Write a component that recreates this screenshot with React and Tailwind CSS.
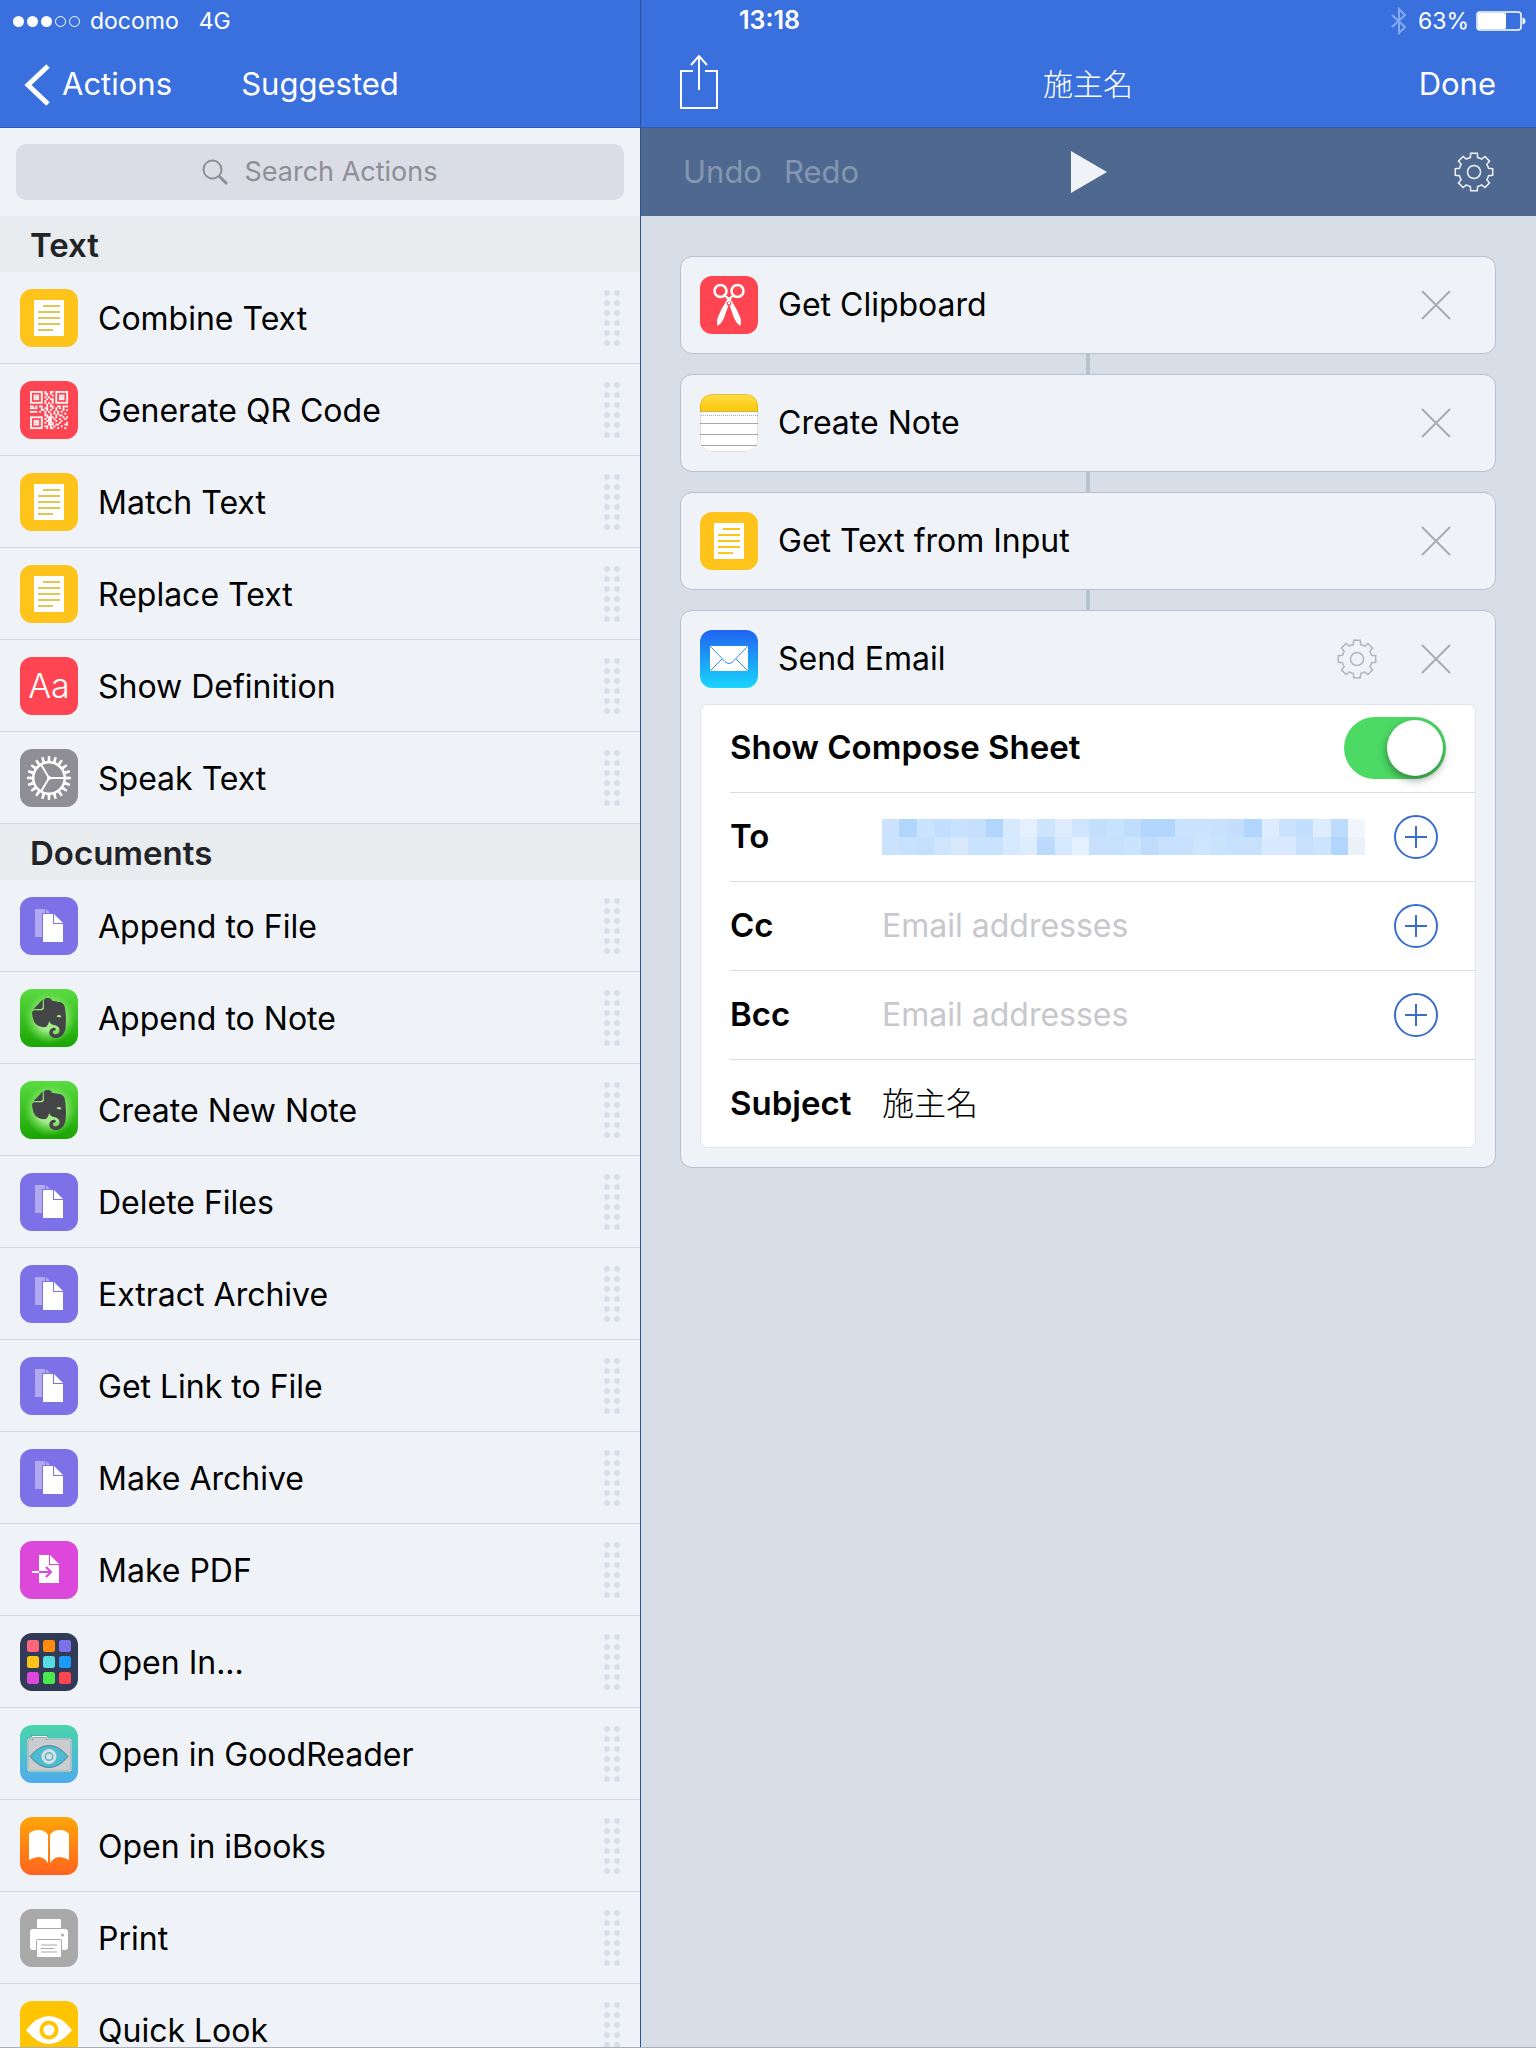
import React from "react";
import { SiEvernote } from "react-icons/si";

const FONT = "font-['Inter','Noto_Sans_CJK_JP',sans-serif]";

/* ---------- shared geometry ---------- */

function toothedPath(c, count, rOuter, rInner, outerHalf, innerHalf) {
  const pt = (r, deg) => {
    const a = (deg * Math.PI) / 180;
    return `${(c + r * Math.cos(a)).toFixed(2)} ${(c + r * Math.sin(a)).toFixed(2)}`;
  };
  let d = "";
  for (let i = 0; i < count; i++) {
    const a = (360 / count) * i - 90;
    const start = pt(rInner, a - innerHalf);
    d += i === 0 ? `M${start}` : `A${rInner} ${rInner} 0 0 1 ${start}`;
    d += `L${pt(rOuter, a - outerHalf)}L${pt(rOuter, a + outerHalf)}L${pt(rInner, a + innerHalf)}`;
  }
  return `${d}A${rInner} ${rInner} 0 0 1 ${pt(rInner, -90 - innerHalf)}Z`;
}

const GEAR = toothedPath(20, 8, 19, 15, 10, 14);
const COG = toothedPath(29, 20, 22, 17, 3, 5);

/* ---------- app tiles ---------- */

function Tile({ fill, children }) {
  return (
    <svg viewBox="0 0 58 58" className="size-[58px] shrink-0 rounded-xl" aria-hidden="true">
      <rect width="58" height="58" fill={fill} />
      {children}
    </svg>
  );
}

function TextTile({ line = "#e0c557" }) {
  return (
    <Tile fill="#fec41b">
      <rect x="14" y="11" width="30" height="36" fill="#fff" />
      <path d="M23 17H40M18 23H40M18 29H40M18 35H40M18 41H33" stroke={line} strokeWidth="2" />
    </Tile>
  );
}

const QR = [
  "#######.#..##.#######",
  "#.....#.##.#..#.....#",
  "#.###.#..#..#.#.###.#",
  "#.###.#.#.#...#.###.#",
  "#.###.#..#.##.#.###.#",
  "#.....#.#...#.#.....#",
  "#######.#.#.#.#######",
  ".........#.#.........",
  "##.#.##..#.##..##.###",
  "####..#.##..#.#.#.#..",
  "......##.#.#..#...#.#",
  "####.#..#.#..#.#.#...",
  "........#..#.#.#...#.",
  "........##.#..#.##...",
  "#######..####.#...#.#",
  "#.....#.#.##.#..#..#.",
  "#.###.#..###..#..#...",
  "#.###.#.#.###...#...#",
  "#.###.#...###.##...##",
  "#.....#.##.#.#...#...",
  "#######..#.##..#...#.",
];

function QrTile() {
  return (
    <Tile fill="#ff4552">
      <g transform="translate(10 10) scale(1.81)" fill="#fff">
        {QR.map((row, y) =>
          [...row].map((c, x) => (c === "#" ? <rect key={`${x}-${y}`} x={x} y={y} width="1.03" height="1.03" /> : null))
        )}
      </g>
    </Tile>
  );
}

function DefinitionTile() {
  return (
    <span className="grid size-[58px] shrink-0 place-items-center rounded-xl bg-[#ff4552] text-[34px] leading-none font-light text-white" aria-hidden="true">
      Aa
    </span>
  );
}

function SpeakTile() {
  return (
    <Tile fill="#8e8e94">
      <path d={`${COG}M29 14.5a14.5 14.5 0 1 0 0 29a14.5 14.5 0 1 0 0-29Z`} fill="#fff" fillRule="evenodd" />
      <path d="M29 29H45M29 29L21 15.5M29 29L21 42.5" stroke="#fff" strokeWidth="2" />
      <circle cx="29" cy="29" r="2" fill="#fff" />
    </Tile>
  );
}

function FilesTile() {
  return (
    <Tile fill="#7d71e8">
      <path d="M15 12H25V16H22V40H15ZM26 12L30 16H26Z" fill="#fff" opacity="0.4" />
      <path d="M23 17H33V27H43V45H23Z" fill="#fff" />
      <path d="M34 17L43 26H34Z" fill="#fff" />
    </Tile>
  );
}

function EvernoteTile({ id }) {
  return (
    <Tile fill={`url(#${id}-bg)`}>
      <defs>
        <linearGradient id={`${id}-bg`} x1="0" y1="0" x2="0" y2="1">
          <stop offset="0" stopColor="#5bdb42" />
          <stop offset="1" stopColor="#1ba403" />
        </linearGradient>
        <radialGradient id={`${id}-glow`}>
          <stop offset="0.5" stopColor="#b8f59c" stopOpacity="0.85" />
          <stop offset="1" stopColor="#7be860" stopOpacity="0" />
        </radialGradient>
      </defs>
      <circle cx="30" cy="29" r="26" fill={`url(#${id}-glow)`} />
      <SiEvernote x="9" y="9" size="40" color="#444547" />
    </Tile>
  );
}

function PdfTile() {
  return (
    <Tile fill="#dc48d9">
      <path d="M19 14H29V24H39V42H19Z" fill="#fff" />
      <path d="M30 14L39 23H30Z" fill="#fff" />
      <path d="M12 31H19" stroke="#fff" strokeWidth="2" />
      <path d="M19 31H31M26 26L31 31L26 36" stroke="#dc48d9" strokeWidth="2" fill="none" />
    </Tile>
  );
}

const GRID = ["#ff667c", "#ff8c0f", "#7d71e8", "#fec41b", "#55dbe0", "#1b9af7", "#dc48d9", "#4be84b", "#ff4552"];

function OpenInTile() {
  return (
    <Tile fill="#313a56">
      {GRID.map((c, i) => (
        <rect key={c} x={7 + (i % 3) * 16} y={7 + Math.floor(i / 3) * 16} width="12" height="12" rx="2.5" fill={c} />
      ))}
    </Tile>
  );
}

function GoodReaderTile() {
  return (
    <Tile fill="url(#reader-bg)">
      <defs>
        <linearGradient id="reader-bg" x1="0" y1="0" x2="0" y2="1">
          <stop offset="0" stopColor="#4ad4aa" />
          <stop offset="1" stopColor="#4fabee" />
        </linearGradient>
      </defs>
      <path d="M8 46V14H12V11.5H27V14H51V46Z" fill="#cbcccf" stroke="#5a8f93" strokeWidth="2" />
      <path d="M8 46V14H12V11.5H27V14H51V46Z" fill="none" stroke="#f3f5f5" strokeWidth="1" />
      <path d="M10 31.5Q19 20.5 29 20.5T48 31.5Q39 42.5 29 42.5T10 31.5Z" fill="#4dbbd2" stroke="#4a8593" strokeWidth="1" />
      <circle cx="29" cy="31.5" r="6" fill="none" stroke="#dcdee0" strokeWidth="3" />
      <circle cx="29" cy="31.5" r="3" fill="#dcdee0" />
    </Tile>
  );
}

function BooksTile() {
  return (
    <Tile fill="url(#books-bg)">
      <defs>
        <linearGradient id="books-bg" x1="0" y1="0" x2="0" y2="1">
          <stop offset="0" stopColor="#ffa508" />
          <stop offset="1" stopColor="#ff641f" />
        </linearGradient>
      </defs>
      <path d="M9 43V17Q12 13 18.5 13Q25 13 28 18V46Q24 40 19 40Q14 40 9 43Z" fill="#fff" />
      <path d="M49 43V17Q46 13 39.5 13Q33 13 30 18V46Q34 40 39 40Q44 40 49 43Z" fill="#fff" />
    </Tile>
  );
}

function PrintTile() {
  return (
    <Tile fill="#a9a9a9">
      <rect x="17" y="10" width="24" height="9" rx="1" fill="#fff" />
      <rect x="10" y="20" width="38" height="21" rx="3" fill="#fff" />
      <rect x="16.5" y="30.5" width="25" height="18" rx="1.5" fill="#fff" stroke="#a9a9a9" />
      <path d="M21 36H37M21 39.5H34M21 43H37" stroke="#a9a9a9" strokeWidth="1" />
      <circle cx="42.5" cy="26" r="1.5" fill="#a9a9a9" />
    </Tile>
  );
}

function QuickLookTile() {
  return (
    <Tile fill="#ffc502">
      <path d="M6 29Q17 15 29 15T52 29Q41 43 29 43T6 29Z" fill="#fff" />
      <circle cx="29" cy="29" r="7.5" fill="#fff" stroke="#ffc502" strokeWidth="4" />
    </Tile>
  );
}

function ClipboardTile() {
  return (
    <Tile fill="#ff4552">
      <g fill="none" stroke="#fff" strokeWidth="2.5">
        <circle cx="20.5" cy="15" r="6" />
        <circle cx="37.5" cy="15" r="6" />
      </g>
      <path d="M24 19Q28 19 32 25.500Q37 33 40.500 42Q41.500 46 40.500 50Q36 47 34 42L29.500 29Q28 24 24 19Z" fill="#fff" />
      <path d="M34 19Q30 19 26 25.500Q21 33 17.500 42Q16.500 46 17.500 50Q22 47 24 42L28.500 29Q30 24 34 19Z" fill="#fff" />
      <circle cx="29" cy="27.5" r="2.2" fill="#ff4552" />
      <circle cx="29" cy="27" r="1.2" fill="#fff" />
    </Tile>
  );
}

function NoteTile() {
  return (
    <Tile fill="#fff">
      <defs>
        <linearGradient id="note-top" x1="0" y1="0" x2="0" y2="1">
          <stop offset="0" stopColor="#ffdc4d" />
          <stop offset="1" stopColor="#fdca04" />
        </linearGradient>
      </defs>
      <rect width="58" height="17" fill="url(#note-top)" />
      <path d="M0 17.5H58" stroke="#cdb26a" />
      <path d="M1 21.5H58" stroke="#aaa" strokeDasharray="1 1" />
      <path d="M0 29.5H58M0 40.5H58M0 51.5H58" stroke="#a9a9a9" />
      <rect x="0.5" y="0.5" width="57" height="57" rx="11.5" fill="none" stroke="#000" opacity="0.12" />
    </Tile>
  );
}

function MailTile() {
  return (
    <Tile fill="url(#mail-bg)">
      <defs>
        <linearGradient id="mail-bg" x1="0" y1="0" x2="0" y2="1">
          <stop offset="0" stopColor="#1f63f0" />
          <stop offset="1" stopColor="#1ad6fd" />
        </linearGradient>
      </defs>
      <rect x="10" y="16" width="38" height="25" rx="1" fill="#fff" />
      <path d="M10.5 16.5L25 31.5Q29 35.5 33 31.5L47.5 16.5M10.5 40.5L22 29M47.5 40.5L36 29" fill="none" stroke="#2b8ff0" strokeWidth="1" />
    </Tile>
  );
}

/* ---------- line icons ---------- */

function GearIcon({ className }) {
  return (
    <svg viewBox="0 0 40 40" className={`size-10 ${className}`} fill="none" stroke="currentColor" strokeWidth="1.5" aria-hidden="true">
      <path d={GEAR} />
      <circle cx="20" cy="20" r="6.5" />
    </svg>
  );
}

function CloseIcon() {
  return (
    <svg viewBox="0 0 30 30" className="size-[30px]" stroke="#a9abb0" strokeWidth="2" aria-hidden="true">
      <path d="M1 1L29 29M29 1L1 29" />
    </svg>
  );
}

/* ---------- sidebar ---------- */

const SECTIONS = [
  {
    title: "Text",
    items: [
      ["Combine Text", <TextTile />],
      ["Generate QR Code", <QrTile />],
      ["Match Text", <TextTile />],
      ["Replace Text", <TextTile />],
      ["Show Definition", <DefinitionTile />],
      ["Speak Text", <SpeakTile />],
    ],
  },
  {
    title: "Documents",
    items: [
      ["Append to File", <FilesTile />],
      ["Append to Note", <EvernoteTile id="append-note" />],
      ["Create New Note", <EvernoteTile id="new-note" />],
      ["Delete Files", <FilesTile />],
      ["Extract Archive", <FilesTile />],
      ["Get Link to File", <FilesTile />],
      ["Make Archive", <FilesTile />],
      ["Make PDF", <PdfTile />],
      ["Open In...", <OpenInTile />],
      ["Open in GoodReader", <GoodReaderTile />],
      ["Open in iBooks", <BooksTile />],
      ["Print", <PrintTile />],
      ["Quick Look", <QuickLookTile />],
    ],
  },
];

function DragHandle() {
  return (
    <span className="grid grid-cols-2 gap-1" aria-hidden="true">
      {Array.from({ length: 12 }, (_, i) => (
        <span key={i} className="size-1.5 rounded-full bg-[#d9dde7]" />
      ))}
    </span>
  );
}

function Sidebar() {
  return (
    <aside className="col-start-1 row-span-2 row-start-1 flex min-h-0 flex-col overflow-hidden bg-[#eff3f8]">
      <nav className="grid h-32 shrink-0 grid-cols-[1fr_auto_1fr] items-center border-b border-[#2c5bb0] bg-[#3970dd] pt-[42px] text-[31px] text-white">
        <button type="button" className="flex items-center gap-3 pl-6">
          <svg viewBox="0 0 26 42" className="h-[42px] w-[26px]" fill="none" stroke="currentColor" strokeWidth="5" aria-hidden="true">
            <path d="M24 2L4 21L24 40" />
          </svg>
          Actions
        </button>
        <h1>Suggested</h1>
      </nav>
      <div className="shrink-0 px-4 py-4">
        <label className="flex h-14 items-center justify-center gap-4 rounded-[10px] bg-[#dadde6]">
          <svg viewBox="0 0 26 26" className="size-[26px]" fill="none" stroke="#8e8e96" strokeWidth="2" aria-hidden="true">
            <circle cx="10.5" cy="10.5" r="9" />
            <path d="M17 17L25 25" strokeWidth="3" />
          </svg>
          <input
            type="search"
            aria-label="Search Actions"
            placeholder="Search Actions"
            className="field-sizing-content text-[27px] text-black outline-none placeholder:text-[#8e8e96]"
          />
        </label>
      </div>
      {SECTIONS.map((section) => (
        <section key={section.title} className="shrink-0">
          <h2 className="flex h-14 items-center bg-[#e8ecef] pt-[3px] pl-[30px] text-[33px] font-semibold text-[#222326]">{section.title}</h2>
          <ul>
            {section.items.map(([name, tile]) => (
              <li key={name} className="border-b border-[#d3d7de]">
                <button type="button" className="flex h-[91px] w-full items-center gap-5 px-5 text-left text-[32px] text-black">
                  {tile}
                  <span className="flex-1 pt-0.5">{name}</span>
                  <DragHandle />
                </button>
              </li>
            ))}
          </ul>
        </section>
      ))}
    </aside>
  );
}

/* ---------- status bar ---------- */

function StatusBar() {
  return (
    <div className="z-10 col-span-2 col-start-1 row-start-1 grid h-10 grid-cols-[1fr_auto_1fr] items-center pt-0.5 pr-2.5 pl-[13px] text-[23px] text-white">
      <div className="flex items-center gap-5">
        <span className="flex items-center gap-2.5">
          <span className="flex gap-[3px]" aria-label="Signal strength">
            {[1, 1, 1, 0, 0].map((on, i) => (
              <span key={i} className={on ? "size-[11px] rounded-full bg-white" : "size-[11px] rounded-full border border-white"} />
            ))}
          </span>
          docomo
        </span>
        <span>4G</span>
      </div>
      <time className="text-[25px] font-semibold">13:18</time>
      <div className="flex items-center justify-end gap-[7px]">
        <svg viewBox="0 0 16 28" className="mr-1 h-7 w-4" fill="none" stroke="#86aaf0" strokeWidth="2" aria-hidden="true">
          <path d="M1 8L14 20L8 26V2L14 8L1 20" />
        </svg>
        63%
        <svg viewBox="0 0 50 20" className="h-5 w-[50px]" aria-hidden="true">
          <rect x="1" y="1" width="44" height="18" rx="3" fill="none" stroke="#fff" strokeWidth="1.5" />
          <rect x="2" y="2" width="28" height="16" rx="1.5" fill="#fff" />
          <path d="M46.5 6.5Q49.5 7.5 49.5 10T46.5 13.5Z" fill="#fff" />
        </svg>
      </div>
    </div>
  );
}

/* ---------- workflow editor ---------- */

const MOSAIC = [
  ["#cbe3fd", "#b1d6fc", "#cbe4fe", "#c2dffd", "#c8e2fe", "#c4e0fd", "#b2d6fb", "#d7e9fd", "#e4f0fe", "#cde4fd", "#deecfd", "#cfe5fd", "#c3dffd", "#c7e2fd", "#bfdcfb", "#b2d6fd", "#b2d6fd", "#cbe4fe", "#cbe4fe", "#c8e2fd", "#c3dffd", "#b1d6fe", "#deecfe", "#c9e3fd", "#c2dffd", "#deedfd", "#bddbfb", "#eff6fe"],
  ["#cbe2fd", "#c5e1fd", "#c3e0fd", "#cfe5fe", "#d8e9fe", "#c9e2fd", "#c9e2fd", "#d6e9fe", "#deedfe", "#bbdafd", "#d6e9fe", "#e6f1ff", "#c7e1fd", "#c7e1fd", "#cbe4fe", "#bfdcfc", "#c7e1fd", "#c7e1fd", "#cfe5fe", "#cae3fd", "#c7e1fd", "#c7e1fd", "#d9eafe", "#d9eafe", "#c7e1fd", "#cee4fd", "#b1d5fc", "#ebf1f8"],
];

function Row({ children, last }) {
  return (
    <div className={last ? "flex h-[87px] items-center pr-[37px]" : "flex h-[89px] items-center border-b border-[#dcdde0] pr-[37px]"}>{children}</div>
  );
}

function FieldLabel({ htmlFor, children }) {
  return (
    <label htmlFor={htmlFor} className="w-[152px] shrink-0 text-[33px] font-semibold">
      {children}
    </label>
  );
}

function AddButton({ label }) {
  return (
    <button type="button" aria-label={label} className="shrink-0 text-[#3a6dcb]">
      <svg viewBox="0 0 44 44" className="size-11" fill="none" stroke="currentColor" strokeWidth="2" aria-hidden="true">
        <circle cx="22" cy="22" r="21" />
        <path d="M11 22H33M22 11V33" />
      </svg>
    </button>
  );
}

function EmailOptions() {
  const input = "min-w-0 flex-1 outline-none placeholder:text-[#c7c7cd]";
  return (
    <div className="mx-[19px] mb-[19px] rounded-lg border border-[#e1e4ea] bg-white pl-[29px] text-[32px]">
      <div className="flex h-[88px] items-center justify-between border-b border-[#dcdde0] pr-[29px] pb-0.5">
        <label htmlFor="compose" className="text-[33px] font-semibold">
          Show Compose Sheet
        </label>
        <input
          id="compose"
          type="checkbox"
          role="switch"
          defaultChecked
          className="flex h-[62px] w-[102px] appearance-none items-center rounded-full bg-gray-300 p-[3px] before:size-14 before:rounded-full before:bg-white before:shadow-[0_4px_8px_rgba(0,0,0,0.4)] checked:justify-end checked:bg-[#4cd964]"
        />
      </div>
      <Row>
        <FieldLabel htmlFor="to">To</FieldLabel>
        <button id="to" type="button" aria-label="To recipients" className="mr-[29px] grid flex-1 grid-cols-[repeat(28,minmax(0,1fr))]">
          {MOSAIC.flat().map((c, i) => (
            <span key={i} className="h-[18px]" style={{ backgroundColor: c }} />
          ))}
        </button>
        <AddButton label="Add To recipient" />
      </Row>
      <Row>
        <FieldLabel htmlFor="cc">Cc</FieldLabel>
        <input id="cc" type="email" placeholder="Email addresses" className={input} />
        <AddButton label="Add Cc recipient" />
      </Row>
      <Row>
        <FieldLabel htmlFor="bcc">Bcc</FieldLabel>
        <input id="bcc" type="email" placeholder="Email addresses" className={input} />
        <AddButton label="Add Bcc recipient" />
      </Row>
      <Row last>
        <FieldLabel htmlFor="subject">Subject</FieldLabel>
        <input id="subject" type="text" defaultValue="施主名" className={`${input} font-light`} />
      </Row>
    </div>
  );
}

function ActionCard({ name, tile, configurable, children }) {
  return (
    <li className="group">
      <article className="rounded-xl border border-[#b6c0d0] bg-[#eff3f8]">
        <div className={`flex items-center gap-5 pt-[19px] pr-11 pl-[19px] ${children ? "pb-4" : "pb-[19px]"}`}>
          {tile}
          <h2 className="flex-1 text-[32px] text-black">{name}</h2>
          {configurable && (
            <button type="button" aria-label={`${name} settings`} className="mr-6">
              <GearIcon className="text-[#b3b5ba]" />
            </button>
          )}
          <button type="button" aria-label={`Remove ${name}`}>
            <CloseIcon />
          </button>
        </div>
        {children}
      </article>
      <div className="mx-auto h-5 w-1 bg-[#b6c3d1] group-last:hidden" />
    </li>
  );
}

function Editor() {
  return (
    <main className="col-start-2 row-span-2 row-start-1 flex min-h-0 flex-col border-l border-[#2b5290] bg-[#d8dee8]">
      <header className="grid h-32 shrink-0 grid-cols-3 items-center border-b border-[#2c5bb0] bg-[#3970dd] pt-[42px] pr-10 pl-[39px] text-[31px] text-white">
        <button type="button" aria-label="Share" className="justify-self-start">
          <svg viewBox="0 0 38 60" className="h-[60px] w-[38px]" fill="none" stroke="currentColor" strokeWidth="2" aria-hidden="true">
            <path d="M13 16H1V53H37V16H25M19 35V2M11 10L19 1L27 10" />
          </svg>
        </button>
        <h1 className="text-center text-[30px] font-light">施主名</h1>
        <button type="button" className="justify-self-end">
          Done
        </button>
      </header>
      <div className="grid h-[88px] shrink-0 grid-cols-[1fr_auto_1fr] items-center bg-[#4e688f] px-[42px] text-[31px]">
        <div className="flex gap-[22px] text-[#8496b0]">
          <button type="button" disabled>
            Undo
          </button>
          <button type="button" disabled>
            Redo
          </button>
        </div>
        <button type="button" aria-label="Run">
          <svg viewBox="0 0 36 42" className="h-[42px] w-9" fill="#eff3f8" aria-hidden="true">
            <path d="M0 0L36 21L0 42Z" />
          </svg>
        </button>
        <button type="button" aria-label="Workflow settings" className="justify-self-end">
          <GearIcon className="text-[#eff3f8]" />
        </button>
      </div>
      <ol className="pt-10 pr-10 pl-[39px]">
        <ActionCard name="Get Clipboard" tile={<ClipboardTile />} />
        <ActionCard name="Create Note" tile={<NoteTile />} />
        <ActionCard name="Get Text from Input" tile={<TextTile line="#fec41b" />} />
        <ActionCard name="Send Email" tile={<MailTile />} configurable>
          <EmailOptions />
        </ActionCard>
      </ol>
    </main>
  );
}

export default function App() {
  return (
    <div className={`grid h-screen grid-cols-[5fr_7fr] grid-rows-[40px_minmax(0,1fr)] overflow-hidden border-b border-[#a9aeb9] ${FONT}`}>
      <Sidebar />
      <Editor />
      <StatusBar />
    </div>
  );
}
